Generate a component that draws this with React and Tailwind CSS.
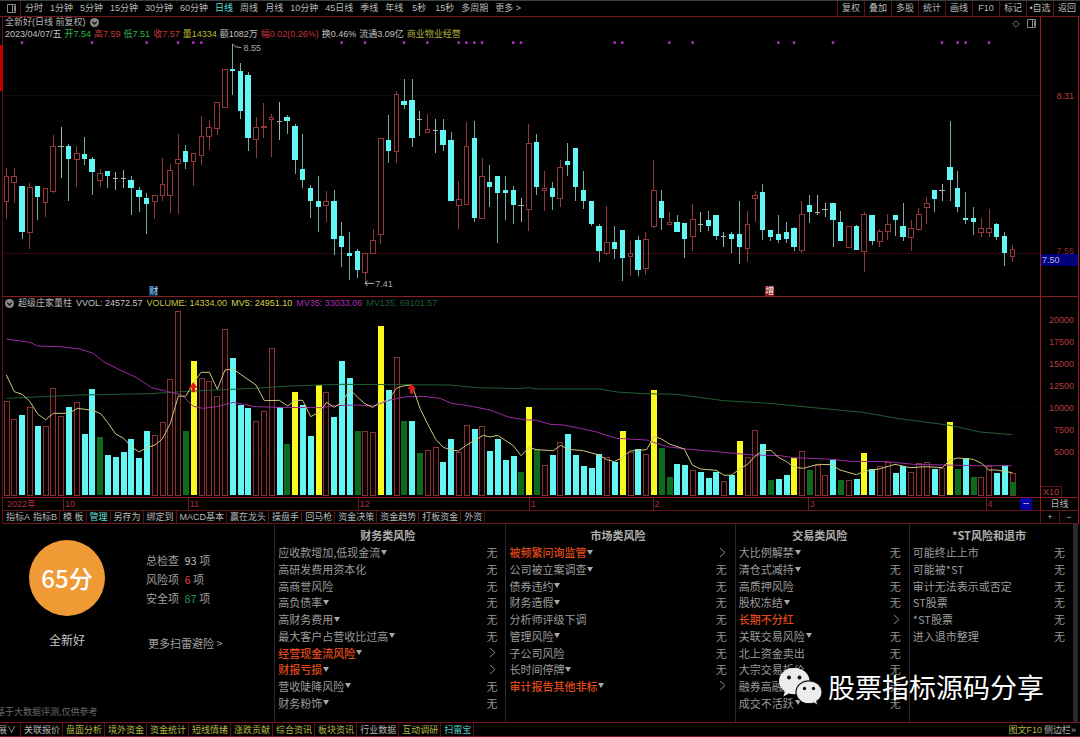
import React, { useState } from 'react';
import clsx from 'clsx';

const PERIODS = ['分时', '1分钟', '5分钟', '15分钟', '30分钟', '60分钟', '日线', '周线', '月线', '10分钟', '45日线', '季线', '年线', '5秒', '15秒', '多周期', '更多 >'];
const TOOLS = ['复权', '叠加', '多股', '统计', '画线', 'F10', '标记', '•自选', '返回'];
const INDICATORS = ['指标A', '指标B', '模 板', '管理', '另存为', '绑定到', 'MACD基本', '赢在龙头', '操盘手', '回马枪', '资金决策', '资金趋势', '打板资金', '外资'];

const QUOTE = [
  ['2023/04/07/五', 'text-[#c0c0c0]'],
  ['开7.54', 'text-[#2fb84a]'],
  ['高7.59', 'text-[#c8343c]'],
  ['低7.51', 'text-[#2fb84a]'],
  ['收7.57', 'text-[#c8343c]'],
  ['量14334', 'text-[#bcb83a]'],
  ['额1082万', 'text-[#c0c0c0]'],
  ['幅0.02(0.26%)', 'text-[#c8343c]'],
  ['换0.46%', 'text-[#c0c0c0]'],
  ['流通3.09亿', 'text-[#c0c0c0]'],
  ['商业物业经营', 'text-[#b0ac38]'],
];

const VOLUME_LEGEND = [
  ['超级庄家量柱', 'text-[#b8b8b8]'],
  ['VVOL: 24572.57', 'text-[#c4c4c4]'],
  ['VOLUME: 14334.00', 'text-[#c9c445]'],
  ['MV5: 24951.10', 'text-[#d8d250]'],
  ['MV35: 33033.06', 'text-[#b02cb4]'],
  ['MV135: 69101.57', 'text-[#1d5c30]'],
];

const NEWS = [
  ['关联报价', 'text-[#b4b4b4]'],
  ['盘面分析', 'text-[#b4b840]'],
  ['境外资金', 'text-[#b4b840]'],
  ['资金统计', 'text-[#b4b840]'],
  ['短线情绪', 'text-[#b4b840]'],
  ['涨跌贡献', 'text-[#b4b840]'],
  ['综合资讯', 'text-[#b4b840]'],
  ['板块资讯', 'text-[#b4b840]'],
  ['行业数据', 'text-[#b4b4b4]'],
  ['互动调研', 'text-[#b4b840]'],
  ['扫雷宝', 'text-[#56cfcf]'],
];

// 月份刻度: 标签 + 到下一刻度的宽度
const MONTHS = [['2022年', 57], ['10', 125], ['11', 171], ['12', 172], ['1', 124], ['2', 156], ['3', 179], ['4', 33]];

// K线: 类型(r 阳, c 阴, w 十字), 最高, 实体上, 实体下, 最低
const CANDLE_GROUPS = [
  {
    base: 120,
    rows: `r 385 407 486 538|r 385 407 428 488|c 438 438 577 597|r 430 440 578 628|c 438 438 472 540|r 445 445 487 532|r 285 318 456 458|w 262 320 320 415|c 312 318 358 484|r 317 340 360 440|c 292 343 358 375|c 352 357 395 465|r 387 400 423 440|c 393 393 407 443|w 395 415 415 450|w 390 415 415 445|c 408 419 444 525|c 440 450 471 515|c 458 475 491 583|r 465 465 486 538|r 353 432 467 483|r 373 389 467 520|r 283 357 371 522|c 315 332 365 388|r 340 340 366 438|r 228 288 348 375|r 240 262 290 330|r 187 187 265 285|r 87 87 204 204|c 12 87 94 166|c 68 93 213 237|c 95 104 294 332|r 230 262 298 355|r 188 257 262 293|r 222 232 239 350|w 187 244 244 300|c 225 231 244 283|c 252 257 359 402|c 282 388 420 443|c 434 444 484 533|c 408 482 501 576|r 452 482 497 547|c 450 482 597 646|c 546 589 622 680|c 576 639 647 720|c 628 632 690 714|r 640 640 698 730|r 568 601 641 641|r 293 293 584 613|c 225 299 332 368|r 152 162 335 368|c 118 182 194 208|c 118 181 294 320|w 212 238 238 288|r 222 268 278 278|w 238 270 270 340|c 238 269 315 332|c 276 299 483 483|r 422 476 498 568|r 245 318 493 493|c 243 293 534 546|r 353 407 536 536|c 375 426 440 500|c 407 407 458 608|c 408 451 458 540|c 438 450 496 552|w 475 497 497 546`,
  },
  {
    base: 300,
    rows: `r 72 128 330 392|c 102 127 261 285|r 212 265 272 334|c 245 264 291 329|r 180 202 296 320|c 128 183 196 228|c 145 145 261 303|c 212 269 303 328|c 303 303 372 377|c 373 377 453 485|r 318 427 462 466|c 377 427 448 478|c 390 390 474 542|r 423 460 469 527|c 408 420 511 527|r 395 417 506 525|r 180 270 380 383|c 269 303 353 391|r 336 367 374 374|c 345 366 396 396|c 370 370 417 475|r 312 358 411 454|w 335 373 373 396|c 333 360 378 392|c 345 345 408 420|w 396 410 410 442|c 396 402 416 460|c 303 402 442 491|r 332 371 445 487|r 272 285 295 367|c 252 277 391 420|c 390 391 410 422|c 345 403 420 428|c 366 396 416 428|c 380 384 441 453|r 303 342 452 460|c 284 316 335 370|w 284 338 338 346|w 310 328 328 352|c 310 310 359 441|c 334 366 423 423|r 377 377 443 443|c 375 377 449 449|r 337 343 456 517|c 346 346 422 436|r 387 394 424 441|r 341 372 394 419|c 345 346 360 409|c 309 377 411 423|r 361 384 412 454|r 323 341 388 394|r 291 310 322 371|c 270 270 296 335|w 252 272 272 303|c 62 201 239 303|c 212 263 322 335|c 277 353 360 371|c 320 353 366 404|r 353 384 399 410|r 328 384 399 410|c 370 371 410 420|c 395 408 460 499|r 436 448 469 487`,
  },
];

const CANDLES = CANDLE_GROUPS.flatMap(({ base, rows }) =>
  rows.split('|').map((row) => {
    const [kind, ...v] = row.split(' ');
    const [high, top, bottom, low] = v.map((n) => Number(n) + base);
    return { kind, high, top, bottom, low };
  })
);

// 量柱: 类型(r 阳, c 阴, g 缩量, y 倍量) + 柱顶
const VOLUMES = 'r319 r373 c360 r337 c393 r394 r280 r363 c337 r321 c418 c283 g426 c481 c485 c471 c432 c490 c408 r420 r382 r253 r49 g407 y198 r250 r259 r304 r102 c188 c330 c338 r379 r348 r160 c335 g448 y292 c330 c424 y270 r290 c366 c198 c249 g409 r409 r411 y94 c286 r186 g379 c377 g475 r466 r457 c500 c433 r470 r390 c403 r394 c467 c433 c495 c482 g532 y336 g462 r511 c481 r441 c418 c480 c514 c519 c478 r487 c500 y408 r470 c463 r477 y285 g459 g547 c507 c510 r524 c531 c549 c530 r558 c540 y438 r485 r404 c447 g554 c552 c541 y488 r467 g525 r510 r540 c492 g554 r554 c552 y473 c522 r512 r502 c534 c513 r530 r505 r501 c522 r520 y381 g523 c489 g545 r547 r512 c534 c511 r535'
  .split(' ')
  .map((s) => ({ kind: s[0], top: Number(s.slice(1)) + 885 }));

const VOLUME_BASE = 1485;
const SIGNAL_DAYS = [2, 11, 18, 22, 24, 25, 43, 46, 51, 54, 58, 59, 60, 61, 65, 66, 78, 79, 85, 88, 99, 101, 106, 120, 122, 123, 126];

const MV5 = '19,240 43,290 67,298 90,320 113,357 137,374 160,355 207,355 232,340 278,346 302,356 325,385 347,417 371,430 394,455 417,471 441,458 465,450 487,432 511,385 535,303 557,304 580,265 603,232 628,232 652,283 675,225 699,222 722,238 768,270 793,317 838,316 863,333 885,316 908,316 932,365 957,352 980,322 1003,337 1027,320 1050,283 1073,307 1095,326 1118,337 1140,323 1165,315 1190,279 1213,272 1236,270 1260,340 1283,387 1307,433 1330,457 1353,465 1375,468 1400,450 1450,421 1470,426 1493,421 1540,452 1563,482 1587,458 1610,464 1660,467 1682,451 1705,463 1750,467 1797,480 1820,494 1843,500 1867,487 1890,468 1940,464 1962,424 1985,432 2008,447 2053,462 2077,510 2102,522 2148,526 2173,541 2195,540 2218,523 2243,508 2266,483 2288,467 2312,466 2335,487 2360,500 2383,517 2410,520 2453,508 2495,509 2520,525 2569,539 2590,530 2637,522 2685,508 2730,518 2780,515 2827,518 2850,495 2873,489 2920,493 2945,505 2966,525 2990,525 3037,533';
const MV35 = '19,132 90,142 113,153 180,155 240,162 280,175 310,200 350,220 410,248 455,278 500,289 545,300 580,334 610,340 650,335 700,322 765,335 840,337 965,338 1000,332 1070,330 1120,333 1170,315 1220,305 1270,304 1320,310 1355,325 1410,333 1470,345 1525,366 1570,374 1610,376 1650,388 1690,390 1740,400 1790,411 1850,430 1940,435 2000,455 2060,462 2180,473 2260,480 2340,482 2380,488 2480,492 2550,499 2660,500 2740,508 2930,512 3035,512';
const MV135 = '19,310 240,300 450,296 580,288 760,280 870,273 1020,268 1350,270 1430,278 1560,281 1585,278 1610,282 1800,282 1850,291 1930,296 2030,298 2170,317 2310,325 2430,337 2590,352 2690,370 2850,391 2940,411 3037,419';

const dayX = (i) => Math.round(19 + i * 23.395);

const RISKS = [
  {
    title: '财务类风险',
    items: ['应收款增加,低现金流+', '高研发费用资本化', '高商誉风险', '高负债率+', '高财务费用+', '最大客户占营收比过高+', '!经营现金流风险+', '!财报亏损+', '营收陡降风险+', '财务粉饰+'],
  },
  {
    title: '市场类风险',
    items: ['!被频繁问询监管+', '公司被立案调查+', '债券违约+', '财务造假+', '分析师评级下调', '管理风险+', '子公司风险', '长时间停牌+', '!审计报告其他非标+'],
  },
  {
    title: '交易类风险',
    items: ['大比例解禁+', '清仓式减持+', '高质押风险', '股权冻结+', '!长期不分红', '关联交易风险+', '北上资金卖出', '大宗交易折价', '融券高融资+', '成交不活跃+'],
  },
  {
    title: '*ST风险和退市',
    items: ['可能终止上市', '可能被*ST', '审计无法表示或否定', 'ST股票', '*ST股票', '进入退市整理'],
  },
];

const LayoutIcon = () => (
  <svg className="w-[9px] h-[9px]" viewBox="0 0 9 9" fill="none" stroke="#8a8a8a">
    <path d="M.5.5h8v8h-8zM5.5 .5v8M7.5 2v5" />
  </svg>
);

const FoldIcon = () => (
  <svg className="w-[9px] h-[9px]" viewBox="0 0 8 8">
    <circle cx="4" cy="4" r="4" fill="#8a8a8a" />
    <path d="M2 3.2 4 5.3 6 3.2" fill="none" stroke="#111" strokeWidth="1.2" />
  </svg>
);

// 顶部周期栏
const PeriodBar = () => {
  const [active, setActive] = useState('日线');
  return (
    <header className="flex justify-between h-4 border-b border-[#7a1620]">
      <nav className="flex">
        <button aria-label="布局" className="flex items-center pl-[7px] pr-1 border-r border-[#5c1018]"><LayoutIcon /></button>
        {PERIODS.map((p) => (
          <button
            key={p}
            onClick={() => setActive(p)}
            className={clsx('min-w-[25px] pl-1 pr-[3px] whitespace-nowrap', p === active ? 'text-[#5fe0dc]' : 'text-[#b8b8b8]')}
          >
            {p}
          </button>
        ))}
      </nav>
      <div className="flex">
        {TOOLS.map((t) => (
          <button key={t} className="w-[27px] border-l border-[#5c1018] text-[#b8b8b8] whitespace-nowrap">{t}</button>
        ))}
      </div>
    </header>
  );
};

const Candle = ({ x, kind, high, top, bottom, low }) => {
  if (kind === 'c') {
    return (
      <g>
        <path d={`M${x} ${high}V${low}`} stroke="#73ada4" strokeWidth="3" />
        <rect x={x - 8} y={top} width="16" height={bottom - top} fill="#62f6f4" />
      </g>
    );
  }
  if (kind === 'w') {
    return <path d={`M${x} ${high}V${low}M${x - 8} ${top}H${x + 8}`} stroke="#a8b0ac" strokeWidth="3" />;
  }
  return (
    <path
      d={`M${x} ${high}V${top}M${x} ${bottom}V${low}M${x - 7} ${top + 1}H${x + 7}V${bottom - 1}H${x - 7}Z`}
      fill="none"
      stroke="#93393b"
      strokeWidth="3"
    />
  );
};

// 主图 K 线
const PriceChart = () => (
  <section className="flex border-b border-[#8c1c24]">
    <div className="flex-1 min-w-0">
      <div className="flex justify-between pl-0.5 pr-1 h-[11px] leading-[13px]">
        <h1 className="flex items-center gap-1 text-[#b8b8b8]">全新好(日线 前复权)<FoldIcon /></h1>
        <div className="flex items-center gap-[7px] pt-0.5">
          <svg className="w-2 h-2" viewBox="0 0 8 8" fill="none" stroke="#777"><path d="M4 .7 7.3 4 4 7.3.7 4z" /></svg>
          <LayoutIcon />
        </div>
      </div>
      <p className="flex gap-[3px] pl-0.5 h-[10px] leading-3 whitespace-nowrap">
        {QUOTE.map(([text, color]) => <span key={text} className={color}>{text}</span>)}
      </p>
      <div className="relative">
        <svg className="block w-full h-[258px]" viewBox="9 114 3111 774" preserveAspectRatio="none">
          <path d="M9 287H3120" stroke="#1c1616" strokeWidth="3" strokeDasharray="6 3" />
          <path d="M9 760H3120" stroke="#3c0a10" strokeWidth="3" />
          {SIGNAL_DAYS.map((d) => (
            <rect key={d} x={dayX(d) - 4} y="124" width="8" height="8" rx="2" fill="#a234b4" />
          ))}
          <g shapeRendering="crispEdges">
            {CANDLES.map((c, i) => <Candle key={i} x={dayX(i)} {...c} />)}
          </g>
          <path d="M698 132l8 8 18 3" fill="none" stroke="#aaa" strokeWidth="3" />
          <path d="M1122 850H1095M1103 842l-8 8 8 8" fill="none" stroke="#bbb" strokeWidth="3" />
        </svg>
        <span className="absolute left-[23.2%] top-1 leading-3 text-[#a8a8a8]">8.55</span>
        <span className="absolute left-[35.9%] bottom-1.5 leading-3 text-[#a8a8a8]">7.41</span>
        <span className="absolute left-[14.1%] bottom-0 leading-[10px] bg-[#0c2a50] text-[#a8d4f4]">财</span>
        <span className="absolute left-[73.5%] bottom-0 leading-[10px] bg-[#8c1212] text-white">增</span>
      </div>
    </div>
    <div className="w-[38px] border-l border-[#a01820] pt-[73px] text-right leading-3 text-[#b83c44]">
      <div className="pr-1">8.31</div>
      <div className="mt-[143px] h-[9px] pr-1 text-[#8c2028]">7.55</div>
      <div className="relative bg-[#00007c] text-left text-[#b4b4dc] pl-px">7.50</div>
    </div>
  </section>
);

const BAR_FILL = { c: '#62f6f4', g: '#0e6a1c', y: '#fafa1e' };

const VolumeBar = ({ x, kind, top }) => {
  if (kind === 'r') {
    return <rect x={x - 7} y={top + 1} width="15" height={VOLUME_BASE - top - 1} fill="#0c0202" stroke="#853436" strokeWidth="3" />;
  }
  return <rect x={x - 8} y={top} width="18" height={VOLUME_BASE + 1 - top} fill={BAR_FILL[kind]} />;
};

// 副图 量柱
const VolumeChart = () => (
  <section className="flex border-b border-[#8c1c24]">
    <div className="flex-1 min-w-0">
      <div className="flex items-center gap-1 pl-0.5 h-3 leading-3 whitespace-nowrap">
        <FoldIcon />
        {VOLUME_LEGEND.map(([text, color]) => <span key={text} className={color}>{text}</span>)}
      </div>
      <svg className="block w-full h-[188px]" viewBox="9 927 3111 564" preserveAspectRatio="none">
        {[959, 1090, 1221, 1352].map((y) => (
          <path key={y} d={`M9 ${y}H3120`} stroke="#24090c" strokeWidth="3" strokeDasharray="3 6" />
        ))}
        <g shapeRendering="crispEdges">
          {VOLUMES.map((v, i) => <VolumeBar key={i} x={dayX(i)} {...v} />)}
          <rect x={dayX(129) - 8} y="1445" width="18" height="41" fill="#0e6a1c" />
        </g>
        <g transform="translate(0 885)" fill="none" strokeWidth="3">
          <polyline points={MV135} stroke="#1f5c33" />
          <polyline points={MV35} stroke="#9a2c9e" />
          <polyline points={MV5} stroke="#cdc67c" />
          <path d="M580 262l13 16h-8v14h-10v-14h-8zM1235 266l13 16h-8v14h-10v-14h-8z" fill="#e01818" />
        </g>
      </svg>
    </div>
    <div className="flex flex-col w-[38px] border-l border-[#a01820] pt-3 text-right leading-[22px] text-[#b83c44]">
      {[20000, 17500, 15000, 12500, 10000, 7500, 5000].map((n) => <div key={n} className="pr-1">{n}</div>)}
      <div className="mt-auto self-start px-0.5 leading-[10px] border border-l-0 border-b-0 border-[#5c1018]">X10</div>
    </div>
  </section>
);

const DateAxis = () => (
  <div className="flex h-[13px] leading-3 border-b border-[#6a141c] text-[#a8303c]">
    {MONTHS.map(([label, w], i) => (
      <span key={label} className={clsx('min-w-0 whitespace-nowrap', i ? 'border-l border-[#7a1620] pl-px' : 'pl-1')} style={{ flex: `${w} 1 0%` }}>{label}</span>
    ))}
    <span className="w-3 mr-2 bg-[#0000a0] text-center text-white leading-[11px]">--</span>
    <button className="w-[38px] border-l border-[#a01820] text-[#b4b4b4]">日线</button>
  </div>
);

const IndicatorTabs = () => (
  <nav className="flex h-[13px] leading-3 border-b border-[#6a141c] whitespace-nowrap text-[#b8b8b8]">
    {INDICATORS.map((t) => (
      <button key={t} className={clsx('pl-[3px] pr-0.5 border-r border-[#5c1018] first:pr-0 first:border-r-0', t === '管理' && 'text-[#5fe0dc]')}>{t}</button>
    ))}
    <span className="flex-1" />
    <button className="w-[19px] border-l border-[#5c1018]">+</button>
    <button className="w-[19px] border-l border-[#5c1018]">−</button>
  </nav>
);

const RiskItem = ({ text }) => {
  const alert = text.startsWith('!');
  const foldable = text.endsWith('+');
  return (
    <li className="flex items-center justify-between whitespace-nowrap">
      <span className={clsx('flex items-center gap-px', alert ? 'font-medium text-[#e24a1c]' : 'text-[#9c9c9c]')}>
        {text.replace('!', '').replace('+', '')}
        {foldable && <svg className="w-1.5 h-[5px]" viewBox="0 0 6 5"><path d="M0 0h6L3 5z" fill="#a8a8a8" /></svg>}
      </span>
      {alert
        ? <svg className="w-2 h-[11px]" viewBox="0 0 8 11" fill="none" stroke="#8a8a8a"><path d="M1 1 6 5.5 1 10" /></svg>
        : <span className="text-[#949494]">无</span>}
    </li>
  );
};

const Score = () => (
  <div className="flex flex-col overflow-hidden text-[#a0a0a0]">
    <div className="flex gap-[41px] pl-[29px] pt-4">
      <div className="flex flex-col items-center">
        <div className="w-[76px] h-[76px] rounded-full bg-[#f09a36] flex items-center justify-center text-2xl font-medium text-white">65分</div>
        <div className="mt-[14px] text-xs leading-5 text-[#c4c4c4]">全新好</div>
      </div>
      <div className="pt-[11px] leading-[19px] whitespace-nowrap">
        <p>总检查&ensp;<span className="text-[#b8b8b8]">93</span> 项</p>
        <p>风险项&ensp;<span className="text-[#d83a3a]">6</span> 项</p>
        <p>安全项&ensp;<span className="text-[#1f9a50]">87</span> 项</p>
        <a href="#more" className="block mt-[26px] ml-0.5">更多扫雷避险 &gt;</a>
      </div>
    </div>
    <p className="mt-auto mb-1 -ml-1 text-[9px] leading-3 text-[#6c6c6c]">基于大数据评测,仅供参考</p>
  </div>
);

const WeChatIcon = () => (
  <svg className="w-[43px] h-[38px]" viewBox="0 0 43 38">
    <path d="M15.3 0C6.8 0 0 5.8 0 13.2c0 4.200 2.300 7.800 5.900 10.200L4.400 28.400l5.300-2.900c1.800.5 3.600.8 5.600.8 8.500 0 15.300-5.800 15.300-13.100S23.800 0 15.300 0z" fill="#ececec" />
    <path d="M30 12.800c-7.200 0-13 5-13 11.400s5.800 11.500 13 11.500c1.700 0 3.200-.2 4.600-.7l4.500 2.600-1.300-4.300c3.200-2.100 5.200-5.400 5.200-9.100 0-6.400-5.800-11.400-13-11.400z" fill="#ececec" stroke="#111" strokeWidth="1.200" />
    <g fill="#111">
      <circle cx="10" cy="9.500" r="2" />
      <circle cx="20.500" cy="9.500" r="2" />
      <circle cx="25.500" cy="20.500" r="1.700" />
      <circle cx="34.500" cy="20.500" r="1.700" />
    </g>
  </svg>
);

const RiskPanel = () => (
  <main className="relative flex-1 grid grid-cols-[274fr_231fr_229fr_174fr_164fr_5px] pr-0.5 text-[11px] font-['Noto_Sans_CJK_SC',sans-serif]">
    <Score />
    {RISKS.map(({ title, items }) => (
      <section key={title} className="flex flex-col min-w-0 border-l border-[#2a2a2e] pl-[3px] pr-2 pb-[11px]">
        <h2 className="h-5 leading-[22px] text-center font-bold text-[#b0b0b0]">{title}</h2>
        <ul className="flex-1 grid grid-rows-10 leading-4">
          {items.map((item) => <RiskItem key={item} text={item} />)}
        </ul>
      </section>
    ))}
    <div className="bg-[#29292c]" />
    <div className="absolute right-9 bottom-[15px] flex items-center gap-1.5">
      <WeChatIcon />
      <span className="text-[27px] leading-10 text-white">股票指标源码分享</span>
    </div>
  </main>
);

const NewsBar = () => (
  <footer className="flex h-[15px] leading-[14px] border-y border-[#7a1620] whitespace-nowrap overflow-hidden">
    <button className="w-[21px] overflow-hidden border-r border-[#5c1018] flex justify-end pr-1 text-[#b4b4b4]">扩展∨</button>
    {NEWS.map(([text, color]) => (
      <button key={text} className={clsx('pl-[3px] pr-0.5 border-r border-[#5c1018]', color)}>{text}</button>
    ))}
    <span className="flex-1" />
    <button className="px-0.5 text-[#b4b840]">图文F10</button>
    <button className="pr-1 text-[#b4b4b4]">侧边栏»</button>
  </footer>
);

export default function App() {
  return (
    <div lang="zh-CN" className="min-h-screen flex flex-col bg-black border-t border-[#37423f] text-[9px] font-['Liberation_Sans','Noto_Sans_CJK_SC',sans-serif]">
      <PeriodBar />
      <div className="flex">
        <div className="w-[3px] border-r border-[#5c1018] pt-7">
          <div className="w-[3px] h-[46px] bg-[#c00000]" />
        </div>
        <div className="flex-1 min-w-0 border-r border-[#a01820] mr-px">
          <PriceChart />
          <VolumeChart />
          <DateAxis />
          <IndicatorTabs />
        </div>
      </div>
      <RiskPanel />
      <NewsBar />
    </div>
  );
}
